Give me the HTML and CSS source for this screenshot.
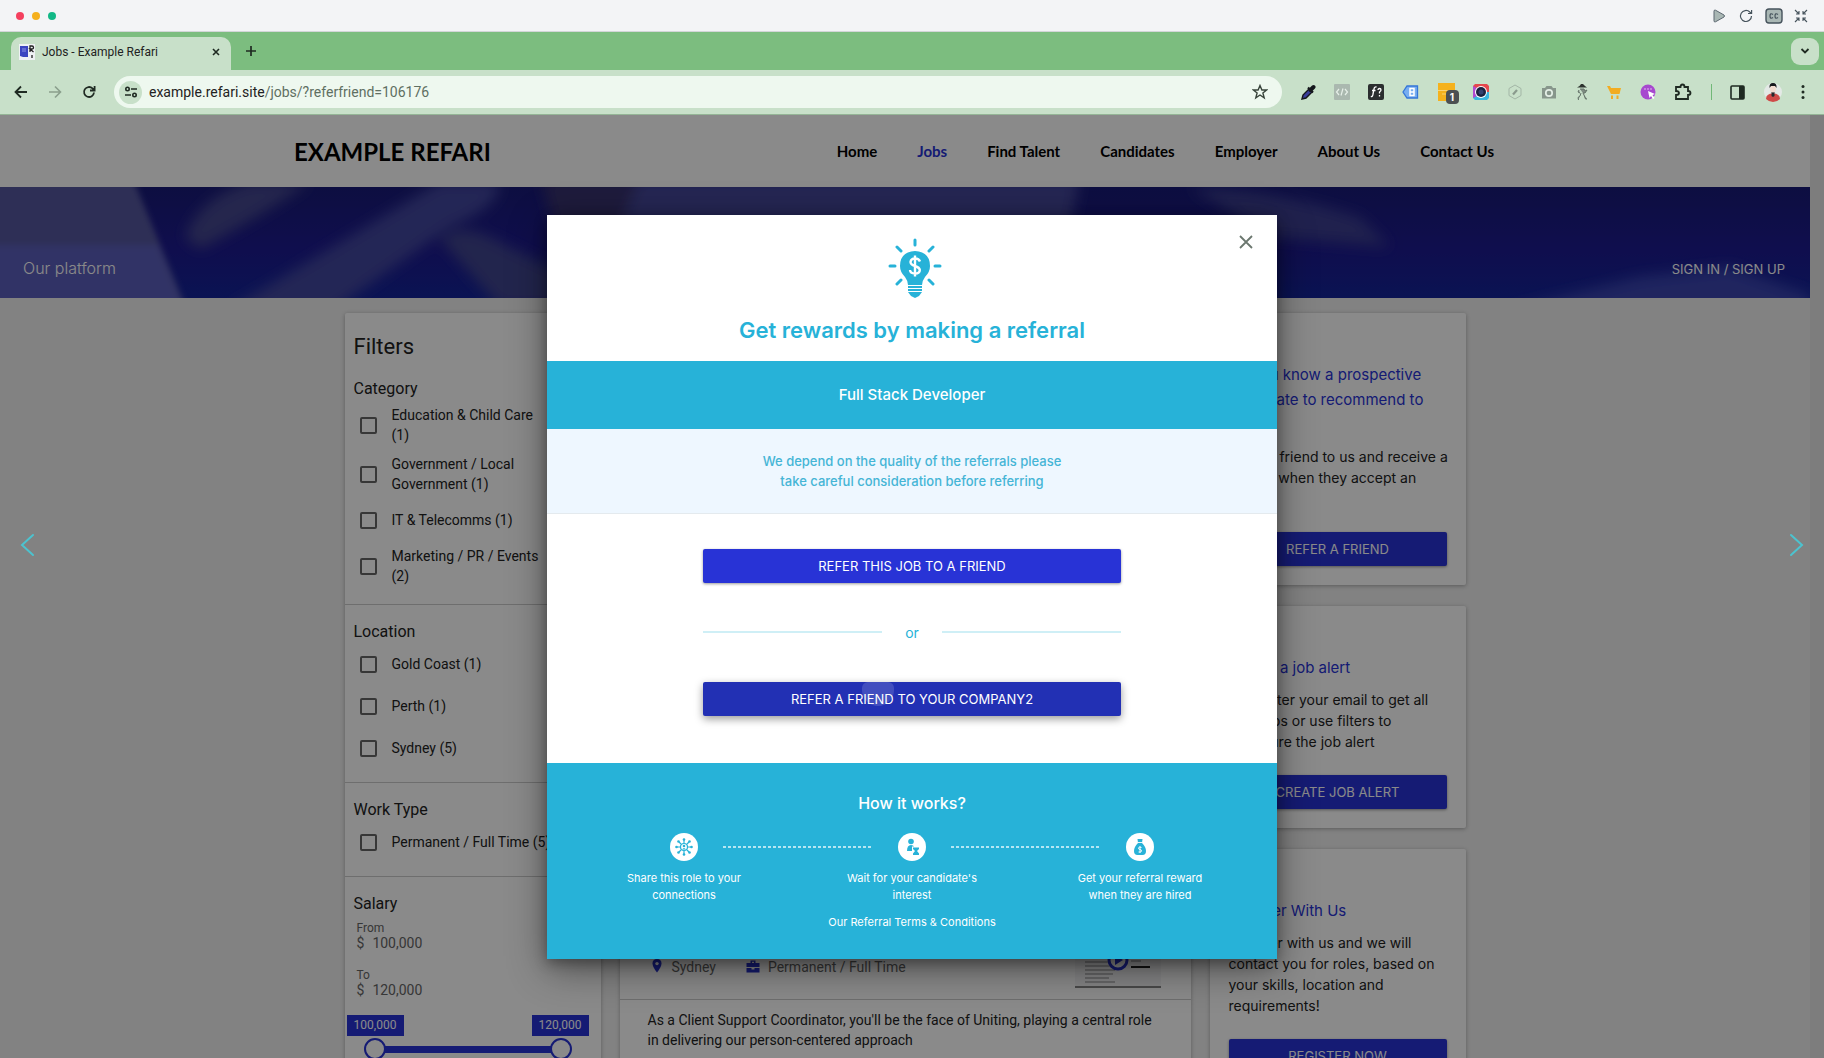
FILE: index.html
```html
<!DOCTYPE html>
<html lang="en">
<head>
<meta charset="UTF-8" />
<meta name="viewport" content="width=device-width, initial-scale=1" />
<title>Jobs - Example Refari</title>
<link rel="stylesheet" href="styles.css">
</head>
<body>
<div class="titlebar">
  <div class="dots"><span class="dot red"></span><span class="dot yellow"></span><span class="dot green"></span></div>
  <div class="player">
    <button class="icon-btn" aria-label="Play"><svg width="16" height="16" viewBox="0 0 16 16"><path d="M3 3.2Q3 1.6 4.5 2.2L13 7Q14 8 13 9L4.5 13.8Q3 14.4 3 12.8Z" fill="#a9b7b4" stroke="#5b6770"/></svg></button>
    <button class="icon-btn" aria-label="Restart"><svg width="16" height="16" viewBox="0 0 16 16" fill="none" stroke="#46535c" stroke-width="1.2"><path d="M13.5 8A5.5 5.5 0 1 1 11.8 4L13.5 5.4M13.6 2V5.5H10"/></svg></button>
    <button class="icon-btn" aria-label="Captions"><svg width="18" height="16" viewBox="0 0 18 16"><rect x="1" y="1" width="16" height="14" rx="3" fill="#a9b7b4" stroke="#46535c" stroke-width="1.4"/><path d="M8 6.4Q5 4.5 5 8T8 9.6M13 6.4Q10 4.5 10 8T13 9.6" fill="none" stroke="#46535c" stroke-width="1.2"/></svg></button>
    <button class="icon-btn" aria-label="Exit full screen"><svg width="14" height="14" viewBox="0 0 14 14" fill="none" stroke="#46535c" stroke-width="1.1"><path d="M1 1L5 5M5 2V5H2M13 1L9 5M9 2V5H12M1 13L5 9M2 9H5V12M13 13L9 9M12 9H9V12"/></svg></button>
  </div>
</div>

<div class="tabstrip">
  <div class="tab">
    <svg class="favicon" width="16" height="16" viewBox="0 0 16 16"><rect width="16" height="16" fill="#eef1f4"/><path d="M1 2H9V13H4L1 12Z" fill="#3a45c0"/><path d="M3 5H7M3 7H7" stroke="#8b93e6"/><path d="M11 8V2H13Q14.5 2 14.5 3.5T13 5H11L14.5 8M13 11V14" fill="none" stroke="#222" stroke-width="1.3"/></svg>
    <span class="tab-title">Jobs - Example Refari</span>
    <button class="icon-btn" aria-label="Close tab"><svg width="8" height="8" viewBox="0 0 8 8" stroke="#1f2a22" stroke-width="1.6"><path d="M1 1L7 7M7 1L1 7"/></svg></button>
  </div>
  <button class="icon-btn new-tab" aria-label="New tab"><svg width="12" height="12" viewBox="0 0 12 12" stroke="#1f2a22" stroke-width="1.7"><path d="M6 1V11M1 6H11"/></svg></button>
  <button class="tab-search" aria-label="Search tabs"><svg width="10" height="6" viewBox="0 0 10 6" fill="none" stroke="#1f2a22" stroke-width="1.8"><path d="M1.5 1L5 4.5L8.5 1"/></svg></button>
</div>

<div class="toolbar">
  <div class="history">
    <button class="icon-btn" aria-label="Back"><svg width="14" height="14" viewBox="0 0 14 14" fill="none" stroke="#1f2a22" stroke-width="1.8"><path d="M13 7H2M7 1.5L1.5 7L7 12.5"/></svg></button>
    <button class="icon-btn" aria-label="Forward"><svg width="14" height="14" viewBox="0 0 14 14" fill="none" stroke="#8a9f8c" stroke-width="1.6"><path d="M1 7H12M7 1.5L12.5 7L7 12.5"/></svg></button>
    <button class="icon-btn" aria-label="Reload"><svg width="14" height="14" viewBox="0 0 14 14" fill="none" stroke="#1f2a22" stroke-width="1.8"><path d="M12 7.5A5 5 0 1 1 10.5 3.4L12.5 5.2M12.6 1V5.5H8"/></svg></button>
  </div>
  <div class="omnibox">
    <span class="site-info"><svg width="14" height="14" viewBox="0 0 14 14" fill="none" stroke="#1f2a22" stroke-width="1.6"><circle cx="3.5" cy="4" r="1.7"/><path d="M7 4H13M1 10H7"/><circle cx="10.5" cy="10" r="1.7"/></svg></span>
    <span class="url">example.refari.site<span class="path">/jobs/?referfriend=106176</span></span>
    <button class="icon-btn star" aria-label="Bookmark"><svg width="16" height="16" viewBox="0 0 16 16" fill="none" stroke="#38443b" stroke-width="1.4"><path d="M8 1.5L9.9 6H14.6L10.9 9L12.2 13.8L8 11L3.8 13.8L5.1 9L1.4 6H6.1Z"/></svg></button>
  </div>
  <div class="extensions">
    <svg width="16" height="18" viewBox="0 0 16 18"><path d="M2 16L3 12L9 6L12 9L6 15Z" fill="#3a3d9a" stroke="#15171c" stroke-width="1.4"/><path d="M8 4.5L13 9.5" stroke="#15171c" stroke-width="2.2"/><path d="M10.5 7L13.5 4" stroke="#15171c" stroke-width="4" stroke-linecap="round"/></svg>
    <svg width="16" height="16" viewBox="0 0 16 16"><rect width="16" height="16" rx="1" fill="#aab8af"/><path d="M5 5L2.5 8L5 11M11 5L13.5 8L11 11M9 4.5L7 11.5" fill="none" stroke="#e6efe8" stroke-width="1.2"/></svg>
    <svg width="16" height="16" viewBox="0 0 16 16"><rect width="16" height="16" rx="2" fill="#2b2e2f"/><path d="M8.5 3Q6.5 2.5 6 5L4.8 11Q4.3 13 2.8 12.5M4 6.5H7.5M10 6Q10 4.5 11.5 4.5T13 6Q13 7 11.5 8V9.5M11.5 11V12.5" fill="none" stroke="#fff" stroke-width="1.3"/></svg>
    <svg width="17" height="14" viewBox="0 0 17 14"><path d="M1 7L5 1H15.5V13H5Z" fill="#78aef0" stroke="#3476d8" stroke-width="1.3"/><path d="M8 3.5H12V10.5H8ZM8 7H12" fill="none" stroke="#fff" stroke-width="1.5"/></svg>
    <span class="ext-badge"><svg width="17" height="18" viewBox="0 0 17 18"><path d="M0 0H17V7H12V18H0Z" fill="#f5b21d"/><path d="M0 7.5H12M4 11H9" stroke="#fbd473"/></svg><span class="count">1</span></span>
    <svg width="16" height="16" viewBox="0 0 16 16"><path d="M2 0H14L16 2V8H0V2Z" fill="#e5484d"/><path d="M0 8H16V14L14 16H2L0 14Z" fill="#3cb7e0"/><path d="M0 2V14L4 12V4Z" fill="#b04bd0"/><circle cx="8" cy="8" r="6" fill="#fff"/><circle cx="8" cy="8" r="5" fill="#1c2140"/><circle cx="8" cy="8" r="2.5" fill="#34406e"/></svg>
    <svg width="16" height="16" viewBox="0 0 16 16"><path d="M8 1L14 4.5V11.5L8 15L2 11.5V4.5Z" fill="none" stroke="#a3b6a6"/><path d="M6 10.5L10 6" stroke="#8a9a8d" stroke-width="2.2"/></svg>
    <svg width="16" height="14" viewBox="0 0 16 14"><path d="M1 3H4L5.5 1H10.5L12 3H15V13.5H1Z" fill="#87968b"/><circle cx="8" cy="8" r="3.2" fill="none" stroke="#e3eee5" stroke-width="1.7"/></svg>
    <svg width="14" height="18" viewBox="0 0 14 18"><path d="M2 4.5H12L10 3L8 1H6L4.5 3Z" fill="#2c332e"/><path d="M5 6H9L10 8L12 7L10 10H8L9 12L10.5 16H12M6 10L5 13L3 14.5L3.5 17M4 7L3 9L5 10" fill="#7e8c82" stroke="#66746a"/></svg>
    <svg width="15" height="15" viewBox="0 0 15 15"><path d="M0 1H3L4 3H14L12.5 9H4Z" fill="#f2ac22"/><path d="M5 10.5V14M10.5 10.5V14" stroke="#f2ac22" stroke-width="2"/></svg>
    <svg width="16" height="16" viewBox="0 0 16 16"><circle cx="8" cy="8" r="7.5" fill="#a748cf"/><path d="M8 7L15 10L12.5 11L14.5 14L13 15L11 12L9.5 14Z" fill="#fff"/><path d="M4 5H6M7 5H9M10 5H12" stroke="#dfb8ee"/></svg>
    <svg width="18" height="18" viewBox="0 0 18 18"><path d="M2 4H6.5Q6.5 1.5 8.5 1.5T10.5 4H14V8Q16.5 8 16.5 10T14 12V16H2V12Q5 12 5 10T2 8Z" fill="none" stroke="#1f2a22" stroke-width="1.8"/></svg>
    <span class="divider"></span>
    <svg width="15" height="15" viewBox="0 0 15 15"><rect x="1" y="1" width="13" height="13" rx="1" fill="none" stroke="#1f2a22" stroke-width="1.6"/><path d="M9 1H14V14H9Z" fill="#1f2a22"/></svg>
    <svg width="20" height="20" viewBox="0 0 20 20"><circle cx="10" cy="10" r="9" fill="#e4e9e6"/><path d="M3 17Q3 11.5 10 11.5T17 17Q14 20 10 20T3 17Z" fill="#cf4a48"/><path d="M8.5 10H11.5V14L10 15L8.5 14Z" fill="#26292e"/><ellipse cx="10" cy="6.5" rx="3" ry="4" fill="#f3dcd0"/><path d="M6.5 6Q6 1 10 1T13.5 6L12 4H8Z" fill="#16181b"/></svg>
    <svg width="4" height="16" viewBox="0 0 4 16" fill="#1f2a22"><circle cx="2" cy="2.5" r="1.5"/><circle cx="2" cy="8" r="1.5"/><circle cx="2" cy="13.5" r="1.5"/></svg>
  </div>
</div>

<div class="viewport">
  <div class="site">
    <header class="site-header">
      <a class="brand" href="#">EXAMPLE REFARI</a>
      <nav>
        <a href="#">Home</a>
        <a class="active" href="#">Jobs</a>
        <a href="#">Find Talent</a>
        <a href="#">Candidates</a>
        <a href="#">Employer</a>
        <a href="#">About Us</a>
        <a href="#">Contact Us</a>
      </nav>
    </header>

    <section class="hero">
      <svg class="hero-bg" viewBox="0 0 1810 111" preserveAspectRatio="none" aria-hidden="true">
        <defs>
          <filter id="soft"><feGaussianBlur stdDeviation="7"/></filter>
          <filter id="edge"><feGaussianBlur stdDeviation="3"/></filter>
          <linearGradient id="base" x2="0" y2="1"><stop offset="0" stop-color="#191b78"/><stop offset=".55" stop-color="#1d1a90"/><stop offset="1" stop-color="#14249a"/></linearGradient>
        </defs>
        <rect width="1810" height="111" fill="url(#base)"/>
        <g filter="url(#soft)">
          <path d="M185 50Q200 10 250 -5H310Q260 30 200 62Z" fill="#44468f"/>
          <path d="M225 125L440 -5H500Q500 20 450 40L330 125Z" fill="#43469f"/>
          <path d="M440 52Q460 35 490 50L570 90V120H500Z" fill="#41448f"/>
          <path d="M540 -10H640L620 60H560Z" fill="#38306f"/>
          <path d="M640 -10H1080L1070 40H620Z" fill="#45479a"/>
          <path d="M1190 0Q1270 0 1360 30L1390 60L1270 50Z" fill="#3b3d90"/>
          <path d="M1500 125L1640 90L1730 80L1810 108V125Z" fill="#3a44b0"/>
        </g>
        <g filter="url(#edge)">
          <path d="M-20 -20H128L190 130H-20Z" fill="#56589f"/>
          <path d="M-20 58H158L188 130H-20Z" fill="#5c5ebc"/>
        </g>
      </svg>
      <span class="platform">Our platform</span>
      <a class="signin" href="#">SIGN IN / SIGN UP</a>
    </section>

    <main class="columns">
      <aside class="card filters">
        <h2>Filters</h2>
        <fieldset>
          <legend>Category</legend>
          <label><input type="checkbox"><span>Education &amp; Child Care (1)</span></label>
          <label><input type="checkbox"><span>Government / Local Government (1)</span></label>
          <label><input type="checkbox"><span>IT &amp; Telecomms (1)</span></label>
          <label><input type="checkbox"><span>Marketing / PR / Events (2)</span></label>
        </fieldset>
        <fieldset class="roomy">
          <legend>Location</legend>
          <label><input type="checkbox"><span>Gold Coast (1)</span></label>
          <label><input type="checkbox"><span>Perth (1)</span></label>
          <label><input type="checkbox"><span>Sydney (5)</span></label>
        </fieldset>
        <fieldset class="roomy">
          <legend>Work Type</legend>
          <label><input type="checkbox"><span>Permanent / Full Time (5)</span></label>
        </fieldset>
        <fieldset class="salary">
          <legend>Salary</legend>
          <div class="amount"><label for="from">From</label><div class="money"><span>$</span><input id="from" type="text" value="100,000"></div></div>
          <div class="amount"><label for="to">To</label><div class="money"><span>$</span><input id="to" type="text" value="120,000"></div></div>
          <div class="tags"><span>100,000</span><span>120,000</span></div>
          <div class="range">
            <input type="range" class="track" aria-label="Minimum salary" min="0" max="100" value="0">
            <input type="range" aria-label="Maximum salary" min="0" max="100" value="100">
          </div>
        </fieldset>
      </aside>

      <article class="card job">
        <div class="job-meta">
          <svg class="pin" width="10" height="14" viewBox="0 0 10 14"><path d="M5 0Q9.5 0 9.5 4.6Q9.5 8 5 13.5Q.5 8 .5 4.6Q.5 0 5 0Z" fill="#2832d0"/><circle cx="5" cy="4.6" r="1.7" fill="#fff"/></svg>
          <span>Sydney</span>
          <svg class="bag" width="14" height="13" viewBox="0 0 14 13" fill="#2832d0"><path d="M4.5 3V.5H9.5V3H8V1.8H6V3Z"/><path d="M.5 3H13.5V7H.5ZM.5 8H5.5V9.5H8.5V8H13.5V12.5H.5Z"/></svg>
          <span>Permanent / Full Time</span>
          <svg class="thumb" width="86" height="45" viewBox="0 6 86 45"><rect width="86" height="56" fill="#f6f6f8"/><path d="M0 50H86" stroke="#888" stroke-width="2"/><path d="M10 21H24M10 25H38M10 29H36M10 33H40M10 37H38M10 41H34M10 45H40M56 24H66" stroke="#888"/><path d="M56 30H75" stroke="#222" stroke-width="2"/><circle cx="43" cy="23" r="9" fill="#fff" stroke="#2832d0" stroke-width="3"/><path d="M40 18L48 23L40 28Z" fill="#2832d0"/></svg>
        </div>
        <p>As a Client Support Coordinator, you'll be the face of Uniting, playing a central role in delivering our person-centered approach</p>
      </article>

      <aside class="side">
        <section class="card promo">
          <h3>Do you know a prospective candidate to recommend to us?</h3>
          <p>Refer a friend to us and receive a reward when they accept an<br>offer</p>
          <button>REFER A FRIEND</button>
        </section>
        <section class="card promo">
          <h3>Create a job alert</h3>
          <p>Just enter your email to get all new jobs or use filters to configure the job alert</p>
          <button>CREATE JOB ALERT</button>
        </section>
        <section class="card promo">
          <h3>Register With Us</h3>
          <p>Register with us and we will contact you for roles, based on your skills, location and requirements!</p>
          <button>REGISTER NOW</button>
        </section>
      </aside>
    </main>
  </div>

  <div class="overlay">
    <div class="modal" role="dialog" aria-labelledby="modal-title">
      <div class="modal-head">
        <button class="icon-btn close" aria-label="Close"><svg width="14" height="14" viewBox="0 0 14 14" stroke="#6b776f" stroke-width="1.8"><path d="M1 1L13 13M13 1L1 13"/></svg></button>
        <svg class="bulb" width="60" height="60" viewBox="-6 0 60 60">
          <g stroke="#27b2d8" stroke-width="3" stroke-linecap="round"><path d="M27 2V7M9 9L13 13M45 9L41 13M2 28H7M47 28H52M9 46L13 42M45 46L41 42"/></g>
          <path d="M27 13Q42 14 42 28Q42 34 37 39Q34 43 34 47H20Q20 43 17 39Q12 34 12 28Q12 14 27 13Z" fill="#27b2d8"/>
          <path d="M20 49H34M20 52H34" stroke="#27b2d8" stroke-width="2"/><path d="M20 54H34L31 58L27 60L23 58Z" fill="#27b2d8"/>
          <path d="M32 23.5Q31 20.5 27 20.5T22.5 24Q22.5 26.5 27 28T31.8 32Q31.8 35.5 27 35.5T22 32M27 17.5V38.5" fill="none" stroke="#fff" stroke-width="2.4"/>
        </svg>
        <h1 id="modal-title">Get rewards by making a referral</h1>
      </div>
      <div class="modal-job">Full Stack Developer</div>
      <p class="modal-note">We depend on the quality of the referrals please<br>take careful consideration before referring</p>
      <div class="modal-actions">
        <button>REFER THIS JOB TO A FRIEND</button>
        <div class="or">or</div>
        <button class="hover">REFER A FRIEND TO YOUR COMPANY2<span class="cursor"></span></button>
      </div>
      <div class="modal-foot">
        <h2>How it works?</h2>
        <ol class="steps">
          <li>
            <svg width="28" height="28" viewBox="0 0 28 28"><circle cx="14" cy="14" r="14" fill="#fff"/><g fill="none" stroke="#27b2d8" stroke-width="1.2"><circle cx="14" cy="14" r="3.5"/><path d="M14 10V7M14 18V21M10 14H7M18 14H21M11 11L9 9M17 11L19 9M11 17L9 19M17 17L19 19"/></g><g fill="#27b2d8"><circle cx="14" cy="6.5" r="1.3"/><circle cx="14" cy="21.5" r="1.3"/><circle cx="6.5" cy="14" r="1.3"/><circle cx="21.5" cy="14" r="1.3"/><circle cx="8.5" cy="8.5" r="1.3"/><circle cx="19.5" cy="8.5" r="1.3"/><circle cx="8.5" cy="19.5" r="1.3"/><circle cx="19.5" cy="19.5" r="1.3"/><circle cx="14" cy="13" r="1.3"/><path d="M12 16.5Q14 13.5 16 16.5Z"/></g></svg>
            <span>Share this role to your<br>connections</span>
          </li>
          <li>
            <svg width="28" height="28" viewBox="0 0 28 28"><circle cx="14" cy="14" r="14" fill="#fff"/><g fill="#27b2d8"><circle cx="13" cy="8.5" r="2.8"/><path d="M9 18Q9 12 13 12Q15.5 12 16 13.5H14V18Z"/><path d="M15 14.5H21V16L19 18L21 20.5V22H15V20.5L17 18L15 16Z"/></g></svg>
            <span>Wait for your candidate's<br>interest</span>
          </li>
          <li>
            <svg width="28" height="28" viewBox="0 0 28 28"><circle cx="14" cy="14" r="14" fill="#fff"/><path d="M11.5 6H16.5L16 10Q20 14 20 18Q20 22 16.5 22H11.5Q8 22 8 18Q8 14 12 10Z" fill="#27b2d8"/><path d="M12 9.5H16M15.5 14.5Q12.5 13.5 12.5 15T14 16.5T15.5 18T12.5 19M14 13V20" fill="none" stroke="#fff" stroke-width=".9"/></svg>
            <span>Get your referral reward<br>when they are hired</span>
          </li>
        </ol>
        <a href="#">Our Referral Terms &amp; Conditions</a>
      </div>
    </div>
  </div>
</div>

<div class="slide-nav">
  <button class="icon-btn" aria-label="Previous"><svg width="16" height="24" viewBox="0 0 16 24" fill="none" stroke="#4cc3cf" stroke-width="2" stroke-linecap="round"><path d="M13 2L2 12L13 22"/></svg></button>
  <button class="icon-btn" aria-label="Next"><svg width="16" height="24" viewBox="0 0 16 24" fill="none" stroke="#4cc3cf" stroke-width="2" stroke-linecap="round"><path d="M3 2L14 12L3 22"/></svg></button>
</div>
</body>
</html>
```
FILE: styles.css
```css
:root {
  --blue: #2833d6;
  --teal: #27b2d8;
  --chrome: #c8e0c9;
  --chrome-dark: #7cbd7f;
}
* {
  box-sizing: border-box;
}
body {
  margin: 0;
  height: 100vh;
  overflow: hidden;
  display: flex;
  flex-direction: column;
  font-family: Inter, "Liberation Sans", sans-serif;
  font-size: 14px;
  color: #222;
}
h1, h2, h3, p, ol {
  margin: 0;
  padding: 0;
  font-weight: 400;
}
a {
  color: inherit;
  text-decoration: none;
}
button {
  font: inherit;
  border: 0;
  padding: 0;
  cursor: pointer;
}
svg {
  display: block;
  flex: none;
}
.icon-btn {
  background: none;
}

/* Browser frame */
.titlebar {
  flex: none;
  height: 32px;
  padding: 0 16px;
  display: flex;
  align-items: center;
  justify-content: space-between;
  background: #f3f4f6;
  border-bottom: 1px solid #d3d6d8;
}
.dots {
  display: flex;
  gap: 8px;
}
.dot {
  width: 8px;
  height: 8px;
  border-radius: 50%;
}
.red { background: #f43f5e; }
.yellow { background: #f5b01e; }
.green { background: #12b886; }
.player {
  display: flex;
  align-items: center;
  gap: 11px;
}
.tabstrip {
  flex: none;
  height: 38px;
  padding: 0 5px 0 11px;
  display: flex;
  align-items: center;
  background: var(--chrome-dark);
}
.tab {
  align-self: flex-end;
  width: 220px;
  height: 33px;
  padding: 0 11px 3px 8px;
  display: flex;
  align-items: center;
  gap: 7px;
  border-radius: 10px 10px 0 0;
  background: var(--chrome);
  font-family: Roboto, sans-serif;
  font-size: 12px;
}
.tab-title {
  flex: 1;
}
.new-tab {
  margin-left: 14px;
}
.tab-search {
  margin-left: auto;
  width: 28px;
  height: 27px;
  display: flex;
  align-items: center;
  justify-content: center;
  border-radius: 9px;
  background: var(--chrome);
}
.toolbar {
  flex: none;
  height: 45px;
  padding: 0 19px 0 14px;
  display: flex;
  align-items: center;
  background: var(--chrome);
  border-bottom: 1px solid #94b596;
}
.history {
  display: flex;
  gap: 20px;
}
.omnibox {
  flex: 1;
  height: 32px;
  margin: 0 18px;
  padding: 0 14px 0 5px;
  display: flex;
  align-items: center;
  gap: 7px;
  border-radius: 16px;
  background: #eef8ef;
  font-family: Roboto, sans-serif;
}
.site-info {
  width: 23px;
  height: 23px;
  display: flex;
  align-items: center;
  justify-content: center;
  border-radius: 50%;
  background: var(--chrome);
}
.url .path {
  color: #5f6f62;
}
.star {
  margin-left: auto;
}
.extensions {
  width: 505px;
  display: flex;
  align-items: center;
  justify-content: space-between;
}
.ext-badge {
  position: relative;
}
.count {
  position: absolute;
  left: 8px;
  top: 7px;
  width: 13px;
  height: 14px;
  border-radius: 4px;
  background: #4c5052;
  color: #fff;
  font-size: 10px;
  font-weight: 700;
  line-height: 14px;
  text-align: center;
}
.divider {
  width: 1px;
  height: 16px;
  background: #71b877;
}

/* Job site */
.viewport {
  flex: 1;
  min-height: 0;
  position: relative;
  overflow: hidden;
  padding-right: 14px;
  background: #e8e8e8;
}
.site {
  min-height: 100%;
  background: #f0f0f0;
}
.site-header {
  height: 72px;
  padding: 0 316px 0 294px;
  display: flex;
  align-items: center;
  justify-content: space-between;
  background: #fff;
  font-family: Lato, sans-serif;
  font-weight: 700;
  color: #000;
}
.brand {
  font-size: 24px;
}
.site-header nav {
  display: flex;
  gap: 40px;
  font-size: 15px;
}
.site-header .active {
  color: var(--blue);
}
.hero {
  position: relative;
  height: 111px;
  padding: 0 25px 18px 23px;
  display: flex;
  align-items: flex-end;
  justify-content: space-between;
  color: #fff;
}
.hero-bg {
  position: absolute;
  inset: 0;
  width: 100%;
  height: 100%;
}
.platform, .signin {
  position: relative;
}
.platform {
  font-size: 16px;
  font-weight: 300;
  line-height: 24px;
}
.signin {
  font-size: 13px;
  line-height: 22px;
}
.columns {
  max-width: 1121px;
  margin: 0 auto;
  padding-top: 15px;
  display: grid;
  grid-template-columns: 256px 1fr 256px;
  gap: 19px;
}
.card {
  background: #fff;
  box-shadow: 0 1px 4px rgba(0, 0, 0, 0.3);
  border-radius: 2px;
}

.filters {
  font-family: Roboto, sans-serif;
}
.filters h2 {
  padding: 20px 9px 0;
  font-size: 22px;
  line-height: 28px;
  font-weight: 400;
}
.filters fieldset {
  min-width: 0;
  margin: 0;
  border: 0;
  padding: 0 10px 18px 15px;
  border-bottom: 1px solid #ccc;
}
.filters legend {
  margin-left: -6px;
  padding: 17px 0 1px;
  font-size: 16px;
  line-height: 20px;
}
.filters h2 + fieldset legend {
  padding: 18px 0 6px;
}
.filters fieldset > label {
  min-height: 40px;
  margin-bottom: 9px;
  padding-right: 44px;
  display: flex;
  align-items: center;
  gap: 15px;
  line-height: 20px;
}
.filters fieldset > label:nth-of-type(3) {
  min-height: 34px;
}
.filters fieldset > label:last-child {
  margin-bottom: 0;
}
.filters input[type="checkbox"] {
  appearance: none;
  flex: none;
  width: 17px;
  height: 17px;
  margin: 0;
  border: 2px solid #666;
  border-radius: 2px;
}
.filters .roomy {
  padding-bottom: 13px;
}
.filters .roomy > label,
.filters .roomy > label:nth-of-type(3) {
  min-height: 42px;
  margin: 0;
  padding-right: 0;
}
.filters .salary {
  border: 0;
}
.filters .salary legend {
  padding-bottom: 3px;
}
.amount {
  margin: 4px -3px 17px;
  color: #666;
}
.amount label {
  display: block;
  font-size: 12px;
  line-height: 14px;
}
.money {
  display: flex;
  gap: 8px;
  line-height: 16px;
}
.money input {
  width: 100px;
  height: 16px;
  padding: 0;
  border: 0;
  font: inherit;
  color: inherit;
  background: none;
}
.tags {
  margin: 0 2px 0 -13px;
  display: flex;
  justify-content: space-between;
}
.tags span {
  width: 57px;
  height: 21px;
  background: var(--blue);
  color: #fff;
  font-size: 12px;
  line-height: 21px;
  text-align: center;
}
.range {
  position: relative;
  height: 26px;
  margin: 0 19px 0 4px;
}
.range input {
  appearance: none;
  position: absolute;
  inset: 0;
  width: 100%;
  margin: 0;
  background: none;
}
.range .track {
  background: linear-gradient(var(--blue), var(--blue)) center / 90% 7px no-repeat;
}
.range input::-webkit-slider-thumb {
  appearance: none;
  width: 22px;
  height: 22px;
  border: 2px solid var(--blue);
  border-radius: 50%;
  background: #fff;
}

.job {
  padding-top: 630px;
  font-family: Roboto, sans-serif;
}
.job-meta {
  height: 57px;
  padding: 0 30px 0 32px;
  display: flex;
  align-items: flex-start;
  color: #666;
  line-height: 48px;
  border-bottom: 1px solid #ccc;
}
.pin {
  margin: 16px 10px 0 0;
}
.bag {
  margin: 17px 8px 0 30px;
}
.thumb {
  margin-left: auto;
}
.job p {
  padding: 10px 28px;
  line-height: 20px;
}

.side {
  display: flex;
  flex-direction: column;
  gap: 21px;
}
.promo {
  padding: 49px 19px 19px;
}
.promo h3 {
  color: var(--blue);
  font-size: 15px;
  line-height: 25px;
}
.promo p {
  margin: 9px -8px 23px 0;
  line-height: 21px;
}
.promo button {
  width: 100%;
  height: 34px;
  border-radius: 2px;
  background: var(--blue);
  color: #fff;
  font-size: 13px;
  box-shadow: 0 1px 3px rgba(0, 0, 0, 0.4);
}

/* Referral dialog */
.overlay {
  position: absolute;
  inset: 0;
  display: flex;
  align-items: center;
  justify-content: center;
  background: rgba(0, 0, 0, 0.46);
}
.modal {
  width: 730px;
  background: #fff;
  box-shadow: 0 10px 36px rgba(0, 0, 0, 0.45), 0 4px 12px rgba(0, 0, 0, 0.3);
  text-align: center;
}
.modal-head {
  position: relative;
  padding: 23px 0 16px;
  color: var(--teal);
}
.close {
  position: absolute;
  top: 20px;
  right: 24px;
}
.bulb {
  margin: 0 auto 17px;
}
.modal h1 {
  font-size: 22px;
  font-weight: 600;
  line-height: 30px;
}
.modal-job {
  background: var(--teal);
  color: #fff;
  font-size: 15px;
  font-weight: 500;
  line-height: 68px;
}
.modal-note {
  padding: 22px 0;
  background: #eef7ff;
  border-bottom: 1px solid #e4eaee;
  color: #45b5d6;
  font-size: 13px;
  font-weight: 500;
  line-height: 20px;
}
.modal-actions {
  width: 418px;
  margin: 0 auto;
  padding: 35px 0 47px;
}
.modal-actions button {
  position: relative;
  display: block;
  width: 100%;
  height: 34px;
  border-radius: 2px;
  background: var(--blue);
  color: #fff;
  font-size: 13px;
  box-shadow: 0 1px 3px rgba(0, 0, 0, 0.4);
}
.modal-actions .hover {
  background: #2230b4;
  box-shadow: 0 3px 8px rgba(0, 0, 0, 0.4);
}
.cursor {
  position: absolute;
  left: 38%;
  top: 0;
  width: 32px;
  height: 24px;
  border-radius: 6px 6px 16px 16px;
  background: rgba(255, 255, 255, 0.15);
}
.or {
  display: flex;
  align-items: center;
  gap: 23px;
  height: 99px;
  color: var(--teal);
}
.or::before, .or::after {
  content: "";
  flex: 1;
  height: 2px;
  background: #cfeff6;
}
.modal-foot {
  padding: 28px 0;
  background: var(--teal);
  color: #fff;
}
.modal-foot h2 {
  font-size: 16px;
  font-weight: 500;
  line-height: 24px;
}
.steps {
  list-style: none;
  margin: 18px 23px 8px;
  display: grid;
  grid-template-columns: repeat(3, 1fr);
}
.steps li {
  position: relative;
  font-size: 11px;
  line-height: 17px;
}
.steps svg {
  margin: 0 auto 9px;
}
.steps span {
  display: block;
}
.steps li + li::before {
  content: "";
  position: absolute;
  left: -33%;
  top: 13px;
  width: 66%;
  height: 2px;
  background: repeating-linear-gradient(90deg, #b4e6f3 0 3px, transparent 3px 5px);
}
.modal-foot a {
  font-size: 11px;
  line-height: 18px;
}

/* Slide arrows sit over everything below the title bar */
.slide-nav {
  position: absolute;
  inset: 32px 0 0;
  padding: 0 20px;
  display: flex;
  align-items: center;
  justify-content: space-between;
  pointer-events: none;
}
.slide-nav button {
  pointer-events: auto;
}
```
